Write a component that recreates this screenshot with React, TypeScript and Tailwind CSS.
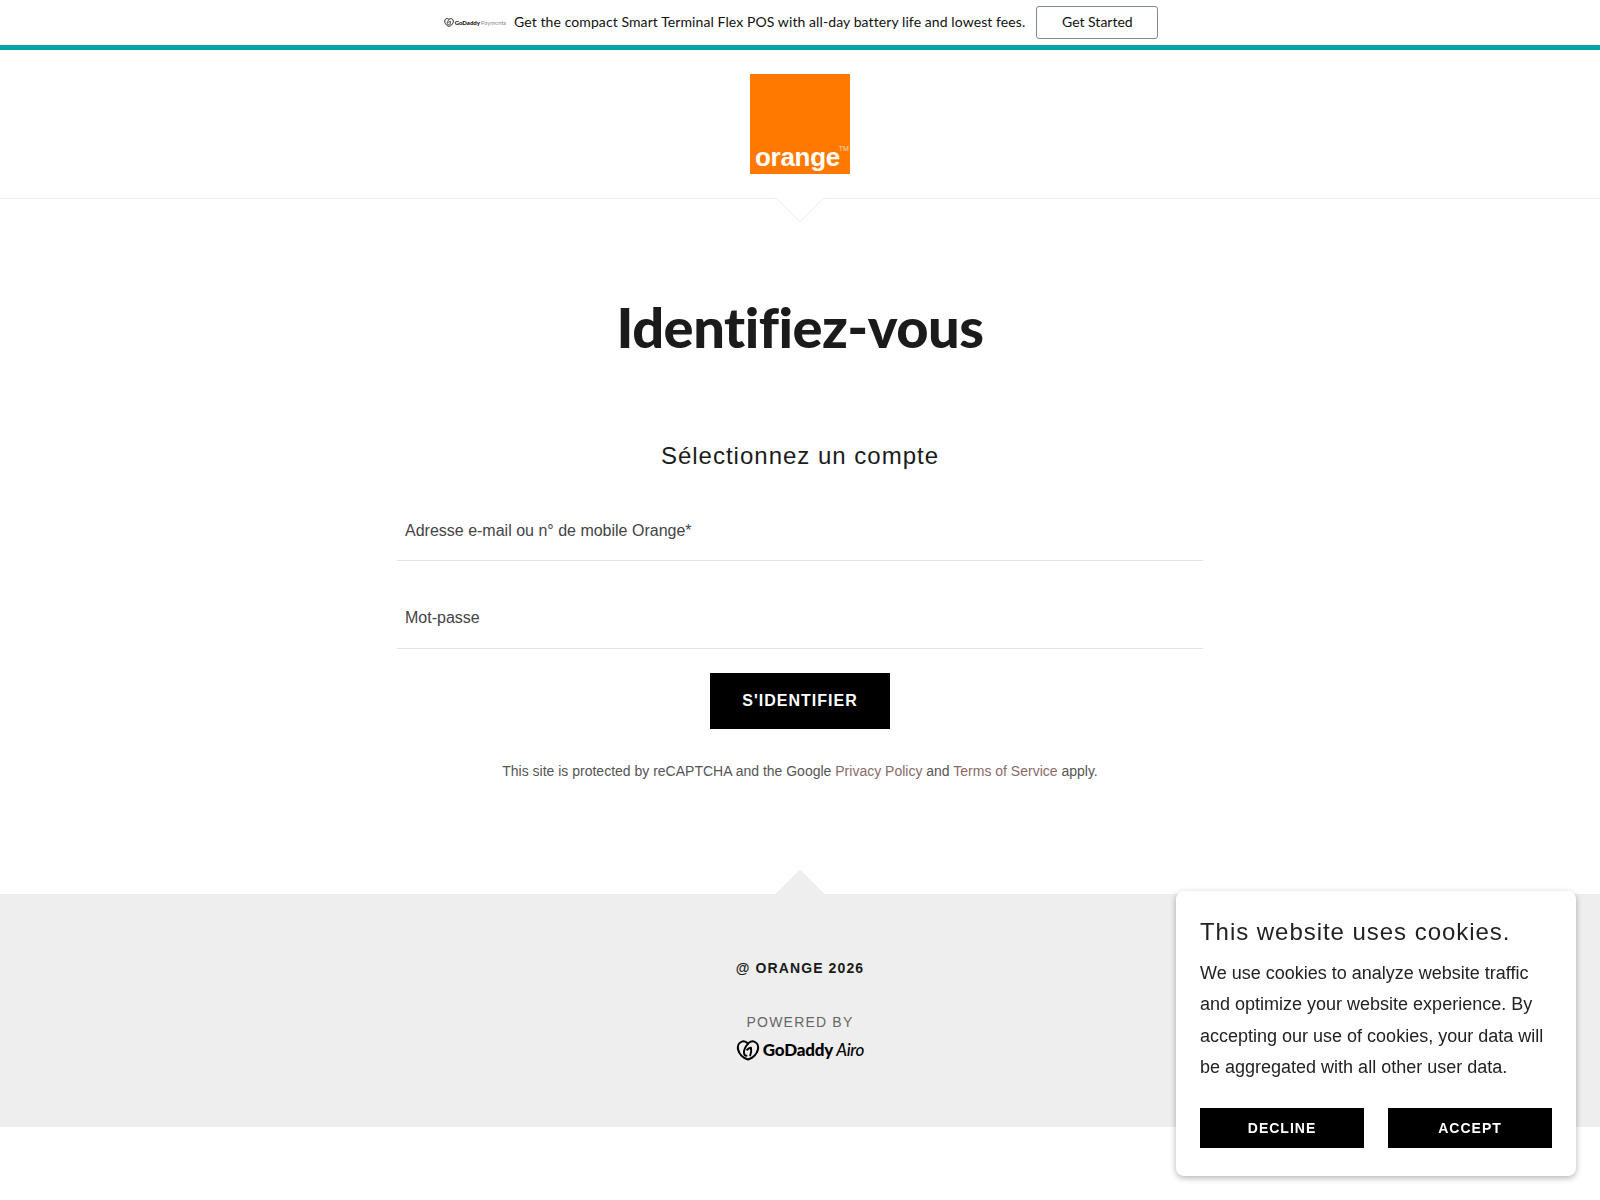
const sans = "font-['Liberation_Sans',Arial,sans-serif]"

function HeartMark({ className }: { className: string }) {
  return (
    <svg viewBox="0 0 24 22" fill="none" stroke="currentColor" className={className}>
      <path
        d="M12 3.800C10.200 1.800 7.800.9 5.500 1.700 2.300 2.800.8 6.500 1.700 10.300c1 4.400 5.200 8.700 10.300 10.200 5.100-1.500 9.300-5.800 10.300-10.200.9-3.800-.6-7.500-3.800-8.600-2.300-.8-4.700.1-6.500 2.100Z"
        strokeWidth="2.200"
        strokeLinejoin="round"
      />
      <path
        d="M12 3.800C9.500 6.800 7.500 10.500 7.800 13.500c.2 2 1.300 3 2.600 3M11 10.200c1.400-1.200 3-2 4.200-2 .4 2.800.2 5.500-.9 8"
        strokeWidth="2"
        strokeLinecap="round"
        strokeLinejoin="round"
      />
    </svg>
  )
}

function Field({ label }: { label: string }) {
  return (
    <div className="h-[52px] border-b border-[#e3e3e3] px-2 pt-[10px] text-[16px] leading-[24px] text-[#444444]">
      {label}
    </div>
  )
}

export default function App() {
  return (
    <div className={`min-h-[1200px] bg-white ${sans}`}>
      <div className="flex h-[50px] items-center justify-center gap-[8px] border-b-[5px] border-[#00a4a6] bg-white pl-[2px]">
        <div className="flex items-center gap-[1px] text-[#111111]">
          <HeartMark className="h-[9px] w-[10px]" />
          <span className="font-['Lato',sans-serif] text-[6px] font-black leading-none">GoDaddy</span>
          <span className="font-['Lato',sans-serif] text-[6px] font-light leading-none">Payments</span>
        </div>
        <span className="-translate-y-[1px] font-['Lato',sans-serif] text-[14px] tracking-[0.09px] text-[#111111]">
          Get the compact Smart Terminal Flex POS with all-day battery life and lowest fees.
        </span>
        <button className="ml-[3px] h-[33px] w-[122px] rounded-[3px] border border-[#7d8a99] font-['Lato',sans-serif] text-[14px] text-[#111111]">
          <span className="relative -top-[1px]">Get Started</span>
        </button>
      </div>

      <header className="relative flex h-[149px] justify-center border-b border-[#eeeeee] pt-6">
        <div className="relative z-10 flex h-[100px] w-[100px] items-end bg-[#ff7900] pb-[1px] pl-[5px]">
          <span className="relative font-['Liberation_Sans',sans-serif] text-[26px] font-bold leading-[32px] tracking-[-0.3px] text-white">
            orange
            <span className="absolute -right-[9px] top-[4px] text-[7px] font-normal leading-none tracking-normal text-[#ffd9b3]">TM</span>
          </span>
        </div>
        <div className="absolute left-1/2 top-[129px] h-[36px] w-[36px] -translate-x-1/2 rotate-45 border-b border-r border-[#f3f3f3] bg-white" />
      </header>

      <main className="mx-auto flex w-[806px] flex-col items-center pt-[94px]">
        <h1 className="font-['Lato',sans-serif] text-[56px] font-black leading-[68px] tracking-[-0.5px] text-[#1b1b1b]">
          Identifiez-vous
        </h1>
        <h2 className="mt-[79px] text-[24px] leading-[32px] tracking-[1px] text-[#1b1b1b]">Sélectionnez un compte</h2>
        <div className="mt-[37px] w-full">
          <Field label="Adresse e-mail ou n° de mobile Orange*" />
          <div className="h-[36px]" />
          <div className="h-[52px] border-b border-[#e3e3e3] px-2 pt-[9px] text-[16px] leading-[24px] text-[#444444]">
            Mot-passe
          </div>
        </div>
        <button className="mt-6 h-[56px] w-[180px] bg-black text-[16px] font-bold tracking-[1px] text-white">
          S'IDENTIFIER
        </button>
        <p className="mt-[32px] text-[14px] leading-[20px] text-[#555555]">
          This site is protected by reCAPTCHA and the Google <a className="text-[#8a6a6a]">Privacy Policy</a> and{' '}
          <a className="text-[#8a6a6a]">Terms of Service</a> apply.
        </p>
      </main>

      <footer className="relative mt-[113px] flex h-[233px] flex-col items-center bg-[#eeeeee] pt-[62px]">
        <div className="absolute left-1/2 top-[-17px] h-[36px] w-[36px] -translate-x-1/2 rotate-45 bg-[#eeeeee]" />
        <p className="relative text-[14px] font-bold leading-[24px] tracking-[1.1px] text-[#1b1b1b]">@ ORANGE 2026</p>
        <p className="mt-[32px] text-[14px] leading-[20px] tracking-[1.2px] text-[#666666]">POWERED BY</p>
        <div className="mt-[7px] flex items-center gap-[3px] text-black">
          <HeartMark className="h-[21px] w-[24px]" />
          <span className="font-['Lato',sans-serif] text-[17px] font-black leading-[22px] tracking-[-0.2px]">GoDaddy</span>
          <span className="font-['Lato',sans-serif] text-[17px] font-medium italic leading-[22px] tracking-[-0.3px]">Airo</span>
        </div>
      </footer>

      <div className="fixed bottom-[24px] right-[24px] h-[285px] w-[400px] rounded-lg bg-white px-6 pt-[25px] shadow-[0_2px_6px_rgba(0,0,0,0.3)]">
        <h3 className="text-[24px] leading-[32px] tracking-[0.96px] text-[#222222]">This website uses cookies.</h3>
        <p className="mt-[10px] text-[18px] leading-[31.25px] text-[#222222]">
          We use cookies to analyze website traffic and optimize your website experience. By accepting our use of
          cookies, your data will be aggregated with all other user data.
        </p>
        <div className="mt-[25px] flex gap-6">
          <button className="h-10 flex-1 bg-black text-[14px] font-bold tracking-[1px] text-white">DECLINE</button>
          <button className="h-10 flex-1 bg-black text-[14px] font-bold tracking-[1px] text-white">ACCEPT</button>
        </div>
      </div>
    </div>
  )
}
